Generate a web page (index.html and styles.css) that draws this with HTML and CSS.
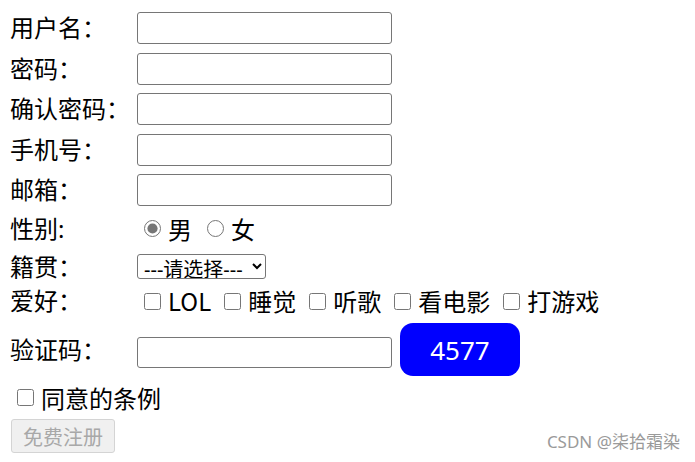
FILE: index.html
```html
<!DOCTYPE html>
<html lang="zh-CN">
<head>
<meta charset="utf-8">
<title>注册</title>
<link rel="stylesheet" href="styles.css">
</head>
<body>
<form class="form">
  <div class="row"><span class="label">用户名：</span><input class="text" type="text"></div>
  <div class="row"><span class="label">密码：</span><input class="text" type="password"></div>
  <div class="row"><span class="label">确认密码：</span><input class="text" type="password"></div>
  <div class="row"><span class="label">手机号：</span><input class="text" type="text"></div>
  <div class="row"><span class="label">邮箱：</span><input class="text" type="text"></div>
  <div class="row row-gender"><span class="label">性别:</span>
    <div class="choices choices-radio">
      <label class="opt"><input class="radio" type="radio" name="sex" checked>男</label>
      <label class="opt"><input class="radio" type="radio" name="sex">女</label>
    </div>
  </div>
  <div class="row row-select"><span class="label">籍贯：</span>
    <select class="select"><option>---请选择---</option></select>
  </div>
  <div class="row row-hobby"><span class="label">爱好：</span>
    <div class="choices">
      <label class="opt"><input class="check" type="checkbox">LOL</label>
      <label class="opt"><input class="check" type="checkbox">睡觉</label>
      <label class="opt"><input class="check" type="checkbox">听歌</label>
      <label class="opt"><input class="check" type="checkbox">看电影</label>
      <label class="opt"><input class="check" type="checkbox">打游戏</label>
    </div>
  </div>
  <div class="row row-code"><span class="label">验证码：</span>
    <input class="text code-input" type="text">
    <div class="code">4577</div>
  </div>
  <div class="row row-agree">
    <label class="opt"><input class="check" type="checkbox">同意的条例</label>
  </div>
  <button class="submit" type="button" disabled>免费注册</button>
</form>
<div class="watermark">CSDN @柒拾霜染</div>
</body>
</html>
```

FILE: styles.css
```css
html, body {
  margin: 0;
  padding: 0;
  background: #fff;
}
body {
  font-family: "Noto Sans", "Noto Sans CJK SC", sans-serif;
  font-size: 24px;
  color: #000;
  width: 695px;
  height: 462px;
  position: relative;
  overflow: hidden;
}
.form {
  padding: 8px 0 0 10px;
  display: flex;
  flex-direction: column;
}
.row {
  display: flex;
  align-items: center;
  height: 40.5px;
}
.label {
  width: 127px;
  flex: none;
  line-height: 30px;
  white-space: nowrap;
}
.text {
  box-sizing: border-box;
  width: 255px;
  height: 32px;
  margin: 0;
  border: 1px solid #767676;
  border-radius: 3px;
  padding: 0 4px;
  font-size: 16px;
  background: #fff;
}
.row-gender { height: 36px; }
.row-select { height: 40px; }
.row-hobby { height: 29px; }
.row-code { height: 68px; }
.row-agree { height: 27px; }

.choices {
  display: flex;
  align-items: center;
  gap: 13px;
  padding-left: 7px;
  line-height: 30px;
  font-family: "Noto Sans CJK SC", "Noto Sans", sans-serif;
}
.choices-radio { gap: 15px; }
.opt {
  display: flex;
  align-items: center;
  gap: 7px;
  white-space: nowrap;
}
.radio, .check {
  width: 17px;
  height: 17px;
  margin: 0;
  flex: none;
}
.radio { accent-color: #767676; }
.select {
  box-sizing: border-box;
  width: 129px;
  height: 25px;
  margin: 0;
  font-family: "Noto Sans", "Noto Sans CJK SC", sans-serif;
  font-size: 20px;
  line-height: 22px;
  color: #000;
  border: 1px solid #767676;
  border-radius: 3px;
  background: #fff;
  padding: 0 0 0 2px;
}
.code-input {
  height: 31px;
  margin-top: 5px;
}
.code {
  margin-left: 8px;
  width: 120px;
  height: 53px;
  border-radius: 13px;
  background: #0000ff;
  color: #fff;
  font-size: 26px;
  display: flex;
  align-items: center;
  justify-content: center;
}
.row-agree .opt { padding-left: 7px; }
.submit {
  align-self: flex-start;
  margin-top: 8.5px;
  margin-left: 1px;
  box-sizing: border-box;
  width: 104px;
  height: 34px;
  padding: 0;
  font-family: "Noto Sans", "Noto Sans CJK SC", sans-serif;
  font-size: 20px;
  color: #a8a8a8;
  background: #f0f0f0;
  border: 1px solid #d4d4d4;
  border-radius: 3px;
}
.watermark {
  position: absolute;
  right: 15px;
  bottom: 10px;
  font-size: 17px;
  color: #9a9a9a;
  line-height: 20px;
}
```
